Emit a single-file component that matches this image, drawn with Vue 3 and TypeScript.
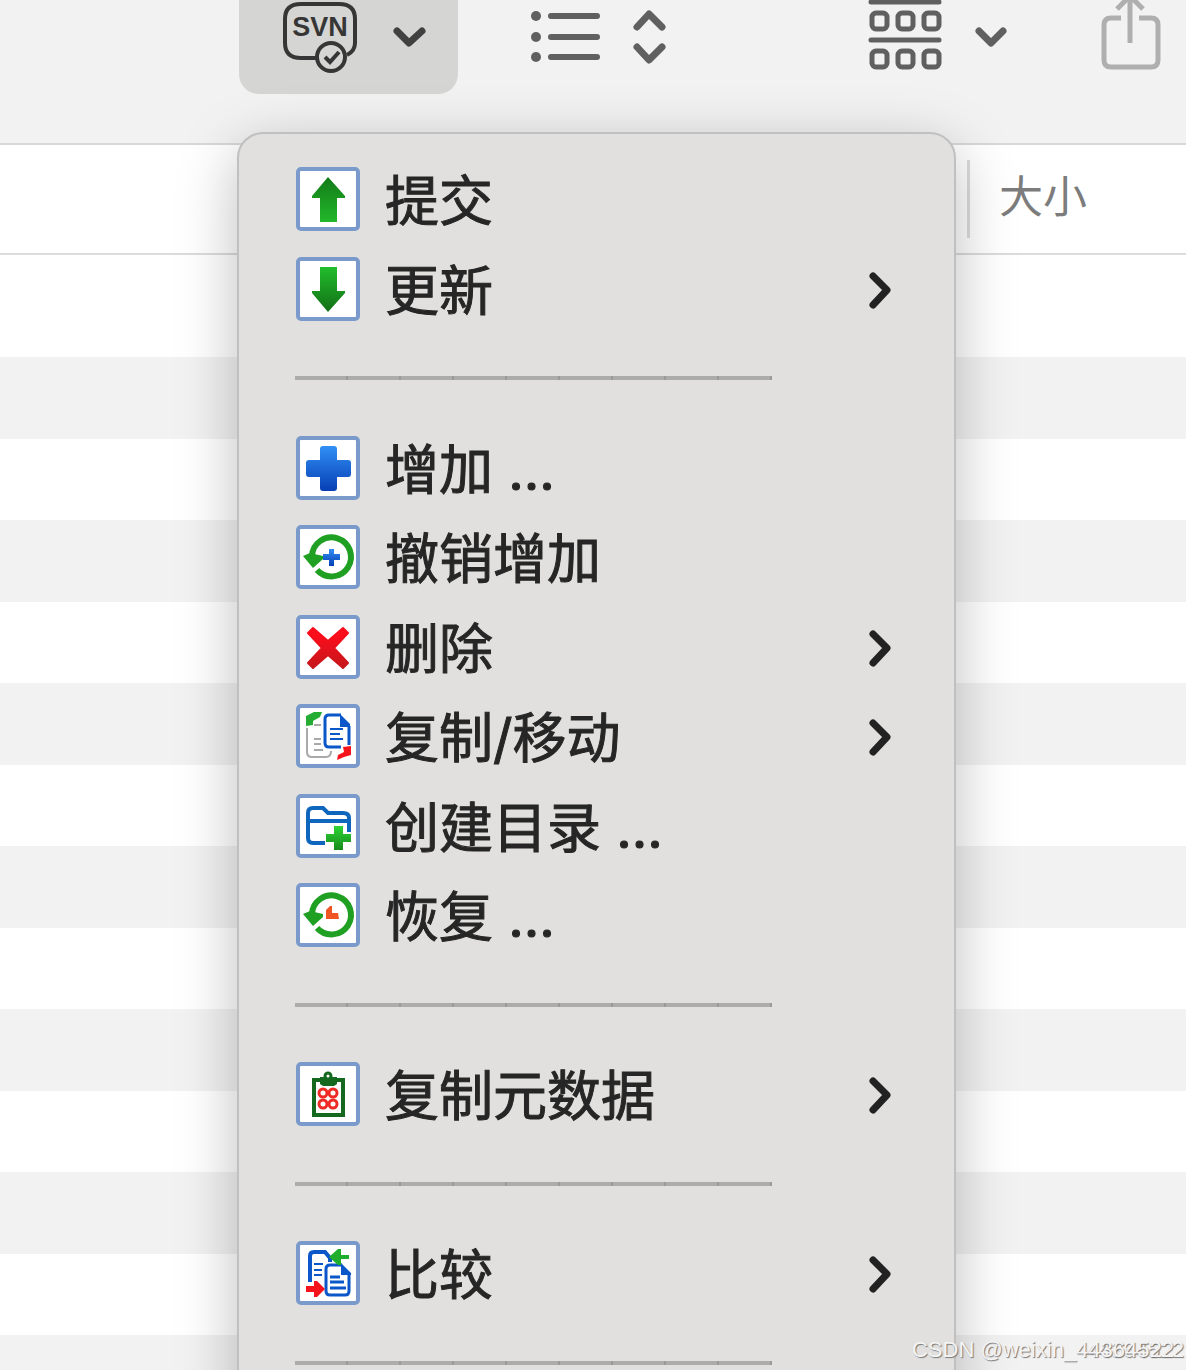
<script setup lang="ts">
interface MenuEntry {
  icon?: string
  label?: string
  submenu?: boolean
}

const entries: MenuEntry[] = [
  { icon: 'commit', label: '提交' },
  { icon: 'update', label: '更新', submenu: true },
  {},
  { icon: 'add', label: '增加 ...' },
  { icon: 'unadd', label: '撤销增加' },
  { icon: 'delete', label: '删除', submenu: true },
  { icon: 'copy', label: '复制/移动', submenu: true },
  { icon: 'mkdir', label: '创建目录 ...' },
  { icon: 'revert', label: '恢复 ...' },
  {},
  { icon: 'metadata', label: '复制元数据', submenu: true },
  {},
  { icon: 'compare', label: '比较', submenu: true },
  {},
]

const rowCount = 14
</script>

<template>
  <div class="window">
    <svg class="defs" width="0" height="0" aria-hidden="true">
      <defs>
        <linearGradient id="green-up" x1="0" y1="0" x2="0" y2="1">
          <stop offset="0" stop-color="#137a18" />
          <stop offset="1" stop-color="#22b82b" />
        </linearGradient>
        <linearGradient id="green-down" x1="0" y1="0" x2="0" y2="1">
          <stop offset="0" stop-color="#22bd2c" />
          <stop offset="1" stop-color="#126f16" />
        </linearGradient>
        <linearGradient id="green-plus" x1="0" y1="0" x2="0" y2="1">
          <stop offset="0" stop-color="#2ed436" />
          <stop offset="1" stop-color="#178a1c" />
        </linearGradient>
        <linearGradient id="blue" x1="0" y1="0" x2="0" y2="1">
          <stop offset="0" stop-color="#318ff5" />
          <stop offset="1" stop-color="#063fb4" />
        </linearGradient>
        <linearGradient id="red" x1="0" y1="0" x2="0" y2="1">
          <stop offset="0.2" stop-color="#fb0d1b" />
          <stop offset="1" stop-color="#c4181c" />
        </linearGradient>
      </defs>
    </svg>

    <header class="toolbar">
      <div class="svn">
        <button class="svn-button" type="button" aria-label="SVN" aria-haspopup="menu" aria-expanded="true">
          <svg width="219" height="94" viewBox="0 0 219 94" fill="none" stroke="#363636">
            <path d="M89 58Q81 58 74 58H62Q46 58 46 43V19Q46 4 62 4H100Q116 4 116 19V43Q116 51 108 55" stroke-width="4" />
            <circle cx="92" cy="57" r="14" fill="#d5d5d4" stroke-width="4" />
            <path d="M86 57L91 62L100 52" stroke-width="4" />
            <text x="81" y="36" text-anchor="middle" class="svn-text">SVN</text>
            <path d="M158 31L170 43L183 31" stroke="#414141" stroke-width="7" stroke-linecap="round" stroke-linejoin="round" />
          </svg>
        </button>

        <ul class="menu" role="menu">
          <li v-for="(entry, i) in entries" :key="i" class="entry" role="none">
            <hr v-if="!entry.label" class="rule" />
            <button v-else class="item" type="button" role="menuitem">
              <svg class="icon" width="64" height="64" viewBox="0 0 64 64" fill="none">
                <rect x="2" y="2" width="60" height="60" rx="3" fill="#fff" stroke="#7a9acb" stroke-width="4" />
                <path v-if="entry.icon === 'commit'" d="M32 10L49 29V31H41V55H24V31H16V29Z" fill="url(#green-up)" />
                <path v-else-if="entry.icon === 'update'" d="M24 10H41V34H49V36L32 55L16 36V34H24Z" fill="url(#green-down)" />
                <path
                  v-else-if="entry.icon === 'add'"
                  d="M27 10H38Q41 10 41 13V24H52Q55 24 55 27V38Q55 41 52 41H41V52Q41 55 38 55H27Q24 55 24 52V41H13Q10 41 10 38V27Q10 24 13 24H24V13Q24 10 27 10Z"
                  fill="url(#blue)"
                />
                <g v-else-if="entry.icon === 'unadd' || entry.icon === 'revert'">
                  <path d="M16 31A19.5 19.5 0 1 1 21 45" stroke="#1fa022" stroke-width="6" />
                  <path d="M7 31L14 28L27 31V34L17 43Z" fill="#1fa022" />
                  <path
                    v-if="entry.icon === 'unadd'"
                    d="M33 24H38V29H44V35H38V41H33V35H27V29H33Z"
                    fill="url(#blue)"
                  />
                  <path v-else d="M30 27L34 23H36V30H42L43 36H30Z" fill="#ef5423" />
                </g>
                <path
                  v-else-if="entry.icon === 'delete'"
                  d="M17 13L32 26L47 13L52 18L38 33L52 48L47 53L32 40L17 53L12 48L26 33L12 18Z"
                  fill="url(#red)"
                  stroke="url(#red)"
                  stroke-width="2"
                  stroke-linejoin="round"
                />
                <g v-else-if="entry.icon === 'copy'">
                  <path d="M10 12L18 8H26L24 13L17 17V21L10 22Z" fill="#24ad32" />
                  <path d="M11 24V48Q11 53 16 53H30Q35 53 35 47M18 21H25M18 35H25M18 40H25M18 46H27" stroke="#a9a9a9" stroke-width="2" />
                  <path d="M45 11H33Q29 11 29 15V39Q29 43 33 43H45M53 41V22" stroke="#0b57c9" stroke-width="3" />
                  <path d="M44 10L54 20V23H44Z" fill="#0b57c9" />
                  <path d="M34 25H47M34 30H44M34 35H47" stroke="#0b57c9" stroke-width="2" />
                  <path d="M47 43L55 42V51L48 53L41 56L42 51L48 48Z" fill="#f5141c" />
                </g>
                <g v-else-if="entry.icon === 'mkdir'">
                  <path d="M29 49H17Q12 49 12 44V19Q12 14 17 14H27L32 19H47Q53 19 53 24V38M12 27H53" stroke="#0f67bd" stroke-width="4" />
                  <path d="M38 32H47V40H55V48H47V56H38V48H30V40H38Z" fill="url(#green-plus)" />
                </g>
                <g v-else-if="entry.icon === 'metadata'">
                  <rect x="18" y="18" width="29" height="35" stroke="#14691e" stroke-width="4" />
                  <path d="M24 15H41V22L38 24H27L24 22Z" fill="#14691e" />
                  <circle cx="32" cy="14" r="3" fill="#fff" stroke="#14691e" stroke-width="3" />
                  <g stroke="#ee2c25" stroke-width="3">
                    <circle cx="27" cy="31" r="4" />
                    <circle cx="37" cy="31" r="4" />
                    <circle cx="27" cy="42" r="4" />
                    <circle cx="37" cy="42" r="4" />
                  </g>
                </g>
                <g v-else>
                  <path d="M14 41V15Q14 11 18 11H29L34 17V21" stroke="#0b57c9" stroke-width="4" />
                  <path d="M18 23H27M18 29H26M18 34H26" stroke="#0b57c9" stroke-width="2" />
                  <path d="M46 24H34Q30 24 30 28V50Q30 54 34 54H49Q53 54 53 50V34" stroke="#0b57c9" stroke-width="3" />
                  <path d="M45 22L55 32V34H45Z" fill="#0b57c9" />
                  <path d="M34 36H44M34 41H48M34 47H50" stroke="#0b57c9" stroke-width="3" />
                  <path d="M33 16L42 8H45V14H53V18H45V24H42Z" fill="#1eae2b" />
                  <path d="M10 45H18V40H21L29 48L21 56H18V51H10Z" fill="#f5141c" />
                </g>
              </svg>
              <span class="label">{{ entry.label }}</span>
              <svg v-if="entry.submenu" class="arrow" width="26" height="42" viewBox="0 0 26 42" fill="none">
                <path d="M6 8L20 22L6 37" stroke="#222" stroke-width="7" stroke-linecap="round" stroke-linejoin="round" />
              </svg>
            </button>
          </li>
        </ul>
      </div>

      <button class="tool view" type="button" aria-label="列表显示">
        <svg width="136" height="94" viewBox="0 0 136 94" fill="none" stroke="#606060" stroke-width="6" stroke-linecap="round" stroke-linejoin="round">
          <g fill="#606060" stroke="none">
            <circle cx="5" cy="16" r="5" />
            <circle cx="5" cy="37" r="5" />
            <circle cx="5" cy="57" r="5" />
          </g>
          <path d="M20 16H66M20 37H66M20 57H66" />
          <path d="M106 27L118 14L131 27M106 47L118 60L131 47" stroke-width="7" />
        </svg>
      </button>

      <button class="tool group" type="button" aria-label="分组">
        <svg width="140" height="94" viewBox="0 0 140 94" fill="none" stroke="#606060" stroke-width="5" stroke-linecap="round" stroke-linejoin="round">
          <path d="M3 2H71M3 40H71" />
          <rect x="4" y="13" width="15" height="16" rx="4" />
          <rect x="30" y="13" width="15" height="16" rx="4" />
          <rect x="56" y="13" width="15" height="16" rx="4" />
          <rect x="4" y="51" width="15" height="16" rx="4" />
          <rect x="30" y="51" width="15" height="16" rx="4" />
          <rect x="56" y="51" width="15" height="16" rx="4" />
          <path d="M111 31L123 43L135 31" stroke-width="7" />
        </svg>
      </button>

      <button class="tool share" type="button" aria-label="共享">
        <svg width="60" height="94" viewBox="0 0 60 94" fill="none" stroke="#afafaf" stroke-width="5" stroke-linejoin="round">
          <path d="M20 18H10Q3 18 3 25V60Q3 67 10 67H50Q57 67 57 60V25Q57 18 50 18H38" />
          <path d="M29 43V-3M16 9L29 -4L42 9" />
        </svg>
      </button>
    </header>

    <div class="columns">
      <span class="name-column"></span>
      <span class="size-column">大小</span>
    </div>

    <div class="rows">
      <div v-for="n in rowCount" :key="n" class="row"></div>
    </div>

    <div class="watermark">CSDN @weixin_<span class="digits">44364522</span></div>
  </div>
</template>

<style>
body {
  margin: 0;
}
</style>

<style scoped>
.window {
  position: relative;
  display: flex;
  flex-direction: column;
  height: 100vh;
  overflow: hidden;
  background: #fff;
  font-family: "Noto Sans CJK SC", sans-serif;
}

.defs {
  position: absolute;
}

button {
  padding: 0;
  border: 0;
  background: none;
  font: inherit;
}

svg {
  display: block;
  flex: none;
}

.toolbar {
  display: flex;
  flex: none;
  align-items: flex-start;
  height: 143px;
  padding-left: 239px;
  border-bottom: 2px solid #d8d8d8;
  background: #f2f2f2;
}

.svn {
  position: relative;
  z-index: 2;
}

.svn-button {
  display: block;
  border-radius: 0 0 20px 20px;
  background: #d5d5d4;
}

.svn-text {
  fill: #363636;
  stroke: none;
  font: bold 27px "Liberation Sans", sans-serif;
}

.tool {
  flex: none;
}

.view {
  margin-left: 73px;
}

.group {
  margin-left: 201px;
}

.share {
  margin-left: 93px;
}

.columns {
  display: flex;
  flex: none;
  align-items: center;
  height: 108px;
  border-bottom: 2px solid #dcdcdc;
}

.name-column {
  flex: 1;
}

.size-column {
  box-sizing: border-box;
  width: 219px;
  height: 78px;
  padding-left: 29px;
  border-left: 3px solid #dcdcdc;
  color: #7c7c7c;
  font-size: 44px;
  line-height: 68px;
}

.row {
  height: 81px;
}

.row:first-child {
  height: 102px;
}

.row:nth-child(even) {
  height: 82px;
  background: #f2f2f2;
}

.menu {
  position: absolute;
  top: 132px;
  left: -2px;
  box-sizing: border-box;
  width: 719px;
  margin: 0;
  padding: 20px 61px 20px 56px;
  border: 2px solid #bfc0bf;
  border-radius: 26px;
  background: #e1e0de;
  box-shadow: 0 16px 60px rgba(0, 0, 0, 0.26);
  list-style: none;
}

.entry {
  display: flex;
  align-items: center;
  height: 89px;
}

.entry:nth-child(odd) {
  height: 90px;
}

.item {
  display: flex;
  flex: 1;
  align-items: center;
  height: 100%;
  padding-left: 1px;
  color: #262626;
  text-align: left;
}

.label {
  flex: 1;
  padding-top: 6px;
  margin-left: 25px;
  font-family: Inter, "Noto Sans CJK SC", sans-serif;
  font-size: 54px;
  line-height: 80px;
  white-space: pre;
  -webkit-text-stroke: 1px #262626;
}

.rule {
  width: 477px;
  height: 4px;
  margin: 0;
  border: 0;
  background: repeating-linear-gradient(90deg, #acacaa 0 51px, #9a9a98 51px 53px);
}

.watermark {
  position: absolute;
  right: 12px;
  bottom: 8px;
  z-index: 3;
  color: #f4f4f4;
  font: 22px/24px "Liberation Sans", sans-serif;
  text-shadow: 1px 1px 1px #777;
}

.digits {
  text-shadow: 1px 1px 1px #777, 10px 0 0 #f4f4f4, 11px 1px 1px #777;
}
</style>
